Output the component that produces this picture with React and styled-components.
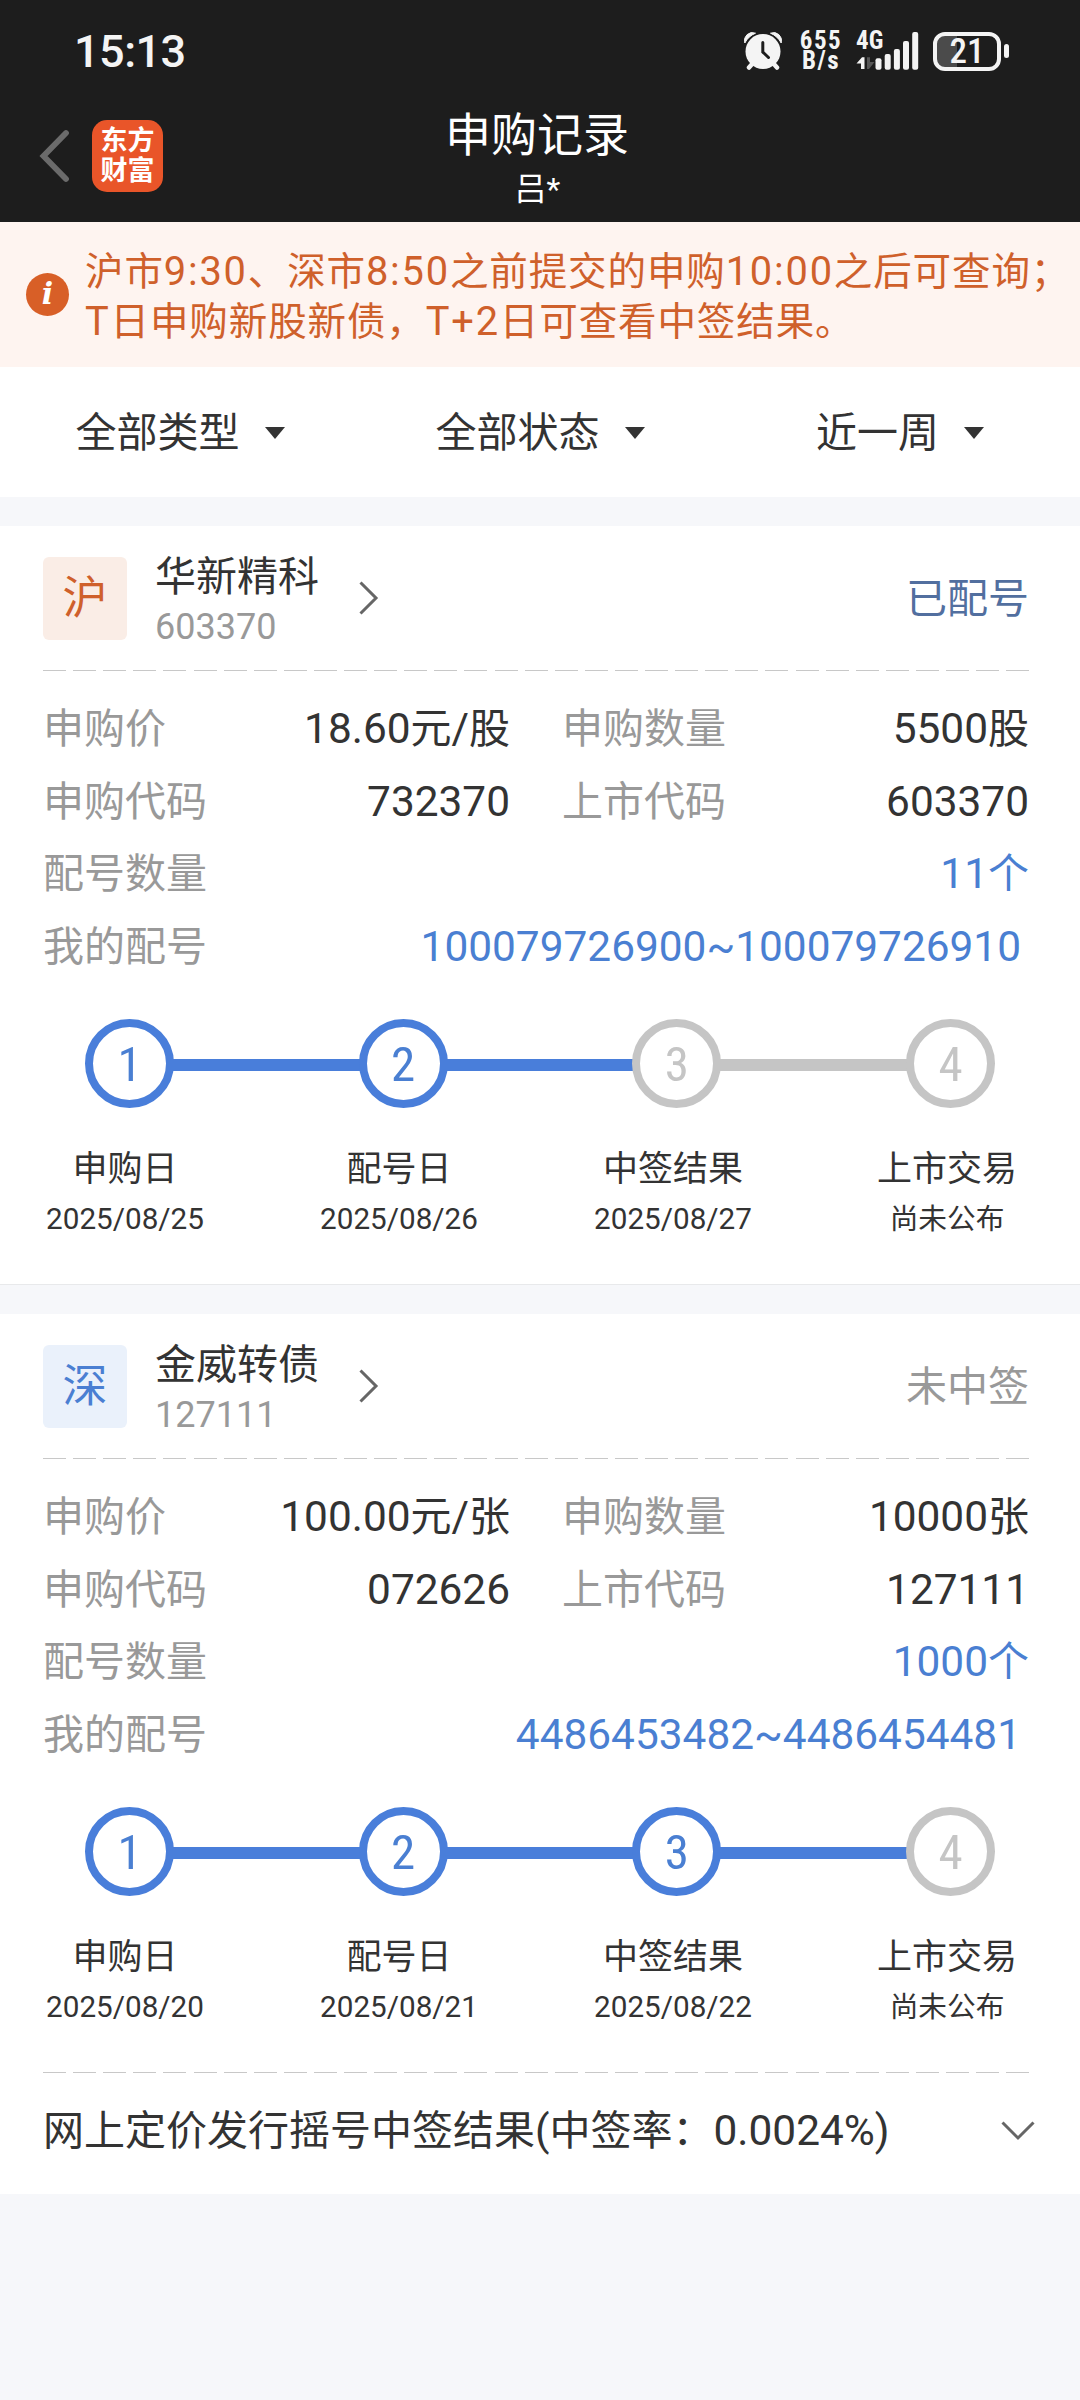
import React from 'react';
import styled, { createGlobalStyle } from 'styled-components';

const records = [
  {
    market: '沪',
    name: '华新精科',
    code: '603370',
    status: '已配号',
    statusColor: '#526f9f',
    price: '18.60元/股',
    amount: '5500股',
    applyCode: '732370',
    listCode: '603370',
    count: '11个',
    numbers: '100079726900~100079726910',
    done: 2,
    steps: [
      ['申购日', '2025/08/25'],
      ['配号日', '2025/08/26'],
      ['中签结果', '2025/08/27'],
      ['上市交易', '尚未公布'],
    ],
  },
  {
    market: '深',
    name: '金威转债',
    code: '127111',
    status: '未中签',
    statusColor: '#999',
    price: '100.00元/张',
    amount: '10000张',
    applyCode: '072626',
    listCode: '127111',
    count: '1000个',
    numbers: '4486453482~4486454481',
    done: 3,
    steps: [
      ['申购日', '2025/08/20'],
      ['配号日', '2025/08/21'],
      ['中签结果', '2025/08/22'],
      ['上市交易', '尚未公布'],
    ],
    footer: '网上定价发行摇号中签结果(中签率：0.0024%)',
  },
];

// latin runs are set a bit larger than the hanzi around them
const Mixed = ({ children }) =>
  children
    .split(/([\x20-\x7e]+)/)
    .filter(Boolean)
    .map((part, i) =>
      /^[\x20-\x7e]/.test(part) ? <Latin key={i}>{part}</Latin> : part
    );

const AlarmIcon = () => (
  <svg width='38' height='38' viewBox='0 0 38 38'>
    <path d='M9 31 L5 35.500 M29 31 L33 35.500' fill='none' stroke='#f4f4f4' strokeLinecap='round' strokeWidth='4.500' />
    <path d='M0.800 11 A8 8 0 0 1 11.500 1.200 Q4.500 4 0.800 11Z' fill='#f4f4f4' stroke='#f4f4f4' />
    <path d='M37.200 11 A8 8 0 0 0 26.500 1.200 Q33.500 4 37.200 11Z' fill='#f4f4f4' stroke='#f4f4f4' />
    <circle cx='19' cy='19.500' r='17.500' fill='#f4f4f4' />
    <path d='M18.800 10.500 V20 L24.500 25.500' fill='none' stroke='#1d1d1d' strokeWidth='3' strokeLinecap='round' />
  </svg>
);

const SignalIcon = () => (
  <svg width='63' height='38' viewBox='0 0 63 38'>
    <path d='M0.500 31.500 L6 25.200 H8.500 V37 H5 V31.500Z' fill='#f4f4f4' />
    <path d='M11 25.200 H14 V30 H18.500 L13 37 H11Z' fill='#565656' />
    <g fill='#f4f4f4'>
      <rect x='19.500' y='26.300' width='6' height='11.500' rx='2' />
      <rect x='28.700' y='22' width='6' height='15.800' rx='2' />
      <rect x='37.900' y='17' width='6' height='20.800' rx='2' />
      <rect x='47' y='9' width='6' height='28.800' rx='2' />
      <rect x='56.200' y='0' width='6' height='37.800' rx='2' />
    </g>
  </svg>
);

const App = () => {
  return (
    <Page>
      <GlobalStyle />
      <Header>
        <StatusBar>
          <Clock>15:13</Clock>
          <StatusIcons>
            <AlarmIcon />
            <Speed>
              <span>655</span>
              <span>B/s</span>
            </Speed>
            <Signal>
              <SignalIcon />
              <Network>4G</Network>
            </Signal>
            <Battery>
              <BatteryBody>21</BatteryBody>
              <BatteryTip />
            </Battery>
          </StatusIcons>
        </StatusBar>
        <NavBar>
          <NavLeft>
            <svg width='32' height='54' viewBox='0 0 32 54'>
              <path d='M27 4 L4.500 27 L27 50' fill='none' stroke='#6b6b6b' strokeWidth='5.800' strokeLinecap='round' />
            </svg>
            <Logo>
              <span>东方</span>
              <span>财富</span>
            </Logo>
          </NavLeft>
          <NavTitle>
            <h1>申购记录</h1>
            <p>吕*</p>
          </NavTitle>
        </NavBar>
      </Header>

      <Notice>
        <InfoDot>i</InfoDot>
        <NoticeText>
          <Mixed>沪市9:30、深市8:50之前提交的申购10:00之后可查询；</Mixed>
          <br />
          <Mixed>T日申购新股新债，T+2日可查看中签结果。</Mixed>
        </NoticeText>
      </Notice>

      <Filters>
        {['全部类型', '全部状态', '近一周'].map((label) => (
          <Filter key={label}>
            {label}
            <svg width='20' height='12' viewBox='0 0 20 12'>
              <path d='M0 0 H20 L10 12Z' fill='#333' />
            </svg>
          </Filter>
        ))}
      </Filters>

      {records.map((record) => (
        <Record key={record.code} {...record} />
      ))}
    </Page>
  );
};

const Record = (props) => {
  const { market, name, code, status, statusColor, done, steps, footer } = props;
  return (
    <Card $line={!footer}>
      <CardHead>
        <Badge $market={market}>{market}</Badge>
        <Stock>
          <StockName>{name}</StockName>
          <StockCode>{code}</StockCode>
        </Stock>
        <svg width='20' height='34' viewBox='0 0 20 34'>
          <path d='M1.500 1.500 L17 17 L1.500 32.500' fill='none' stroke='#666' strokeWidth='3' />
        </svg>
        <Status $color={statusColor}>{status}</Status>
      </CardHead>
      <Dashes />
      <Fields>
        <Field label='申购价' value={props.price} />
        <Field label='申购数量' value={props.amount} />
        <Field label='申购代码' value={props.applyCode} />
        <Field label='上市代码' value={props.listCode} />
        <Field label='配号数量' value={props.count} wide />
        <Field label='我的配号' value={props.numbers} wide inset />
      </Fields>
      <Track>
        {steps.map((step, i) => (
          <React.Fragment key={step[0]}>
            {i > 0 && <Bar $on={i <= done} />}
            <Dot $on={i < done}>{i + 1}</Dot>
          </React.Fragment>
        ))}
      </Track>
      <Steps>
        {steps.map(([label, date]) => (
          <Step key={label}>
            <StepLabel>{label}</StepLabel>
            <StepDate>
              <Mixed>{date}</Mixed>
            </StepDate>
          </Step>
        ))}
      </Steps>
      {footer && (
        <>
          <Dashes />
          <CardFooter>
            <span>
              <Mixed>{footer}</Mixed>
            </span>
            <svg width='34' height='20' viewBox='0 0 34 20'>
              <path d='M1.500 1.500 L17 17 L32.500 1.500' fill='none' stroke='#666' strokeWidth='3' />
            </svg>
          </CardFooter>
        </>
      )}
    </Card>
  );
};

const Field = ({ label, value, wide, inset }) => (
  <FieldRow $wide={wide}>
    <FieldLabel>{label}</FieldLabel>
    <FieldValue $blue={wide} $inset={inset}>
      <Mixed>{value}</Mixed>
    </FieldValue>
  </FieldRow>
);

const GlobalStyle = createGlobalStyle`
  * {
    box-sizing: border-box;
    margin: 0;
    padding: 0;
  }
  body {
    background: #f6f7fa;
    font-family: Roboto, 'Noto Sans CJK SC', sans-serif;
    font-size: 41px;
    line-height: 50px;
    color: #333;
  }
  svg {
    display: block;
    flex-shrink: 0;
  }
`;

const Page = styled.main`
  width: 1080px;
  min-height: 2400px;
  background: #f6f7fa;
  white-space: nowrap;
`;

const Latin = styled.span`
  font-size: 1.034em;
  line-height: 1;
`;

const Header = styled.header`
  height: 222px;
  background: #1d1d1d;
  color: #fff;
`;

const StatusBar = styled.div`
  display: flex;
  justify-content: space-between;
  align-items: center;
  height: 102px;
  padding: 0 71px 0 74px;
`;

const Clock = styled.div`
  padding-top: 2px;
  font-size: 45px;
  font-weight: 500;
  letter-spacing: -0.500px;
  color: #f4f4f4;
`;

const StatusIcons = styled.div`
  display: flex;
  align-items: center;
  color: #f4f4f4;
`;

const Speed = styled.div`
  display: flex;
  flex-direction: column;
  align-items: center;
  width: 46px;
  margin: 0 12px 0 16px;
  font-size: 25px;
  font-stretch: 75%;
  font-weight: 700;
  line-height: 20px;
  letter-spacing: 1.500px;
`;

const Signal = styled.div`
  position: relative;
  margin-right: 14px;
`;

const Network = styled.span`
  position: absolute;
  top: -1px;
  left: 0;
  font-size: 25px;
  font-stretch: 75%;
  font-weight: 700;
  line-height: 20px;
`;

const Battery = styled.div`
  display: flex;
  align-items: center;
  gap: 3px;
`;

const BatteryBody = styled.div`
  width: 68px;
  height: 39px;
  border: 4px solid #f4f4f4;
  border-radius: 12px;
  background: linear-gradient(to right, #4b4b4b 20px, transparent 20px);
  font-size: 35px;
  font-stretch: 75%;
  font-weight: 500;
  line-height: 32px;
  text-align: center;
`;

const BatteryTip = styled.div`
  width: 5px;
  height: 14px;
  border-radius: 3px;
  background: #f4f4f4;
`;

const NavBar = styled.div`
  display: grid;
  grid-template-columns: 163px 1fr 163px;
  height: 120px;
`;

const NavLeft = styled.div`
  display: flex;
  align-items: center;
  justify-content: space-between;
  height: 108px;
  padding-left: 39px;
`;

const Logo = styled.div`
  display: flex;
  flex-direction: column;
  align-items: center;
  width: 71px;
  height: 72px;
  padding-top: 6px;
  border-radius: 15px;
  background: #e95529;
  font-size: 27px;
  font-weight: 700;
  line-height: 30px;
`;

const NavTitle = styled.div`
  padding-top: 3px;
  text-align: center;
  h1 {
    margin-left: -6px;
    font-size: 46px;
    font-weight: 400;
    line-height: 60px;
  }
  p {
    margin-left: -5px;
    font-size: 32px;
    line-height: 48px;
  }
`;

const Notice = styled.section`
  display: flex;
  align-items: center;
  gap: 16px;
  height: 145px;
  padding-left: 26px;
  background: #fef4f0;
`;

const InfoDot = styled.div`
  width: 43px;
  height: 43px;
  border-radius: 50%;
  background: #d85f27;
  color: #fff;
  font-family: 'DejaVu Serif', serif;
  font-size: 30px;
  font-style: italic;
  font-weight: 700;
  line-height: 42px;
  text-align: center;
`;

const NoticeText = styled.p`
  padding-top: 4px;
  font-size: 38.500px;
  letter-spacing: 0.9px;
  color: #cf602b;
  ${Latin} {
    letter-spacing: 1.800px;
  }
`;

const Filters = styled.nav`
  display: grid;
  grid-template-columns: repeat(3, 1fr);
  height: 130px;
  margin-bottom: 29px;
  padding-top: 1px;
  background: #fff;
`;

const Filter = styled.div`
  display: flex;
  align-items: center;
  justify-content: center;
  gap: 25px;
`;

const Card = styled.section`
  margin-bottom: 29px;
  padding: 0 51px 0 43px;
  background: #fff;
  border-bottom: ${(props) => (props.$line ? '1px solid #e8e9eb' : 'none')};
`;

const CardHead = styled.div`
  display: flex;
  align-items: center;
  height: 144px;
`;

const Badge = styled.div`
  width: 84px;
  height: 83px;
  border-radius: 6px;
  background: ${(props) => (props.$market === '沪' ? '#faede6' : '#eaf1fb')};
  color: ${(props) => (props.$market === '沪' ? '#cf602b' : '#4a7fd2')};
  font-size: 45px;
  line-height: 84px;
  text-align: center;
`;

const Stock = styled.div`
  width: 204px;
  margin-left: 28px;
  padding-top: 8px;
`;

const StockName = styled.div`
  line-height: 50px;
`;

const StockCode = styled.div`
  font-size: 36px;
  line-height: 50px;
  color: #999;
`;

const Status = styled.div`
  margin-left: auto;
  padding-top: 2px;
  color: ${(props) => props.$color};
`;

const Dashes = styled.div`
  height: 1px;
  background: repeating-linear-gradient(to right, #c8c8c8 0 23px, transparent 23px 30.100px);
`;

const Fields = styled.div`
  display: grid;
  grid-template-columns: 1fr 1fr;
  grid-auto-rows: 72.500px;
  column-gap: 52px;
  padding: 22px 0 36px;
`;

const FieldRow = styled.div`
  display: flex;
  align-items: center;
  justify-content: space-between;
  grid-column: ${(props) => (props.$wide ? 'span 2' : 'auto')};
`;

const FieldLabel = styled.span`
  color: #999;
`;

const FieldValue = styled.span`
  padding-right: ${(props) => (props.$inset ? '8px' : '0')};
  color: ${(props) => (props.$blue ? '#4a7fd2' : '#333')};
`;

const Track = styled.div`
  display: flex;
  align-items: center;
  padding: 0 34px 0 42px;
`;

const Dot = styled.div`
  flex-shrink: 0;
  width: 89px;
  height: 89px;
  border: 8.500px solid ${(props) => (props.$on ? '#497eda' : '#c5c5c5')};
  border-radius: 50%;
  color: ${(props) => (props.$on ? '#4a7fd2' : '#c5c5c5')};
  font-size: 49px;
  font-stretch: 75%;
  line-height: 75px;
  text-align: center;
`;

const Bar = styled.div`
  flex: 1;
  height: 12px;
  margin: 3px -2px 0;
  background: ${(props) => (props.$on ? '#497eda' : '#c5c5c5')};
`;

const Steps = styled.div`
  display: flex;
  justify-content: space-between;
  padding: 39px 0 44px;
`;

const Step = styled.div`
  width: 164px;
  text-align: center;
`;

const StepLabel = styled.div`
  font-size: 35px;
  line-height: 46px;
`;

const StepDate = styled.div`
  margin-top: 5px;
  font-size: 28.700px;
  line-height: 42px;
`;

const CardFooter = styled.div`
  display: flex;
  align-items: center;
  justify-content: space-between;
  height: 121px;
  margin-right: -6px;
  padding-bottom: 5px;
`;

export default App;
